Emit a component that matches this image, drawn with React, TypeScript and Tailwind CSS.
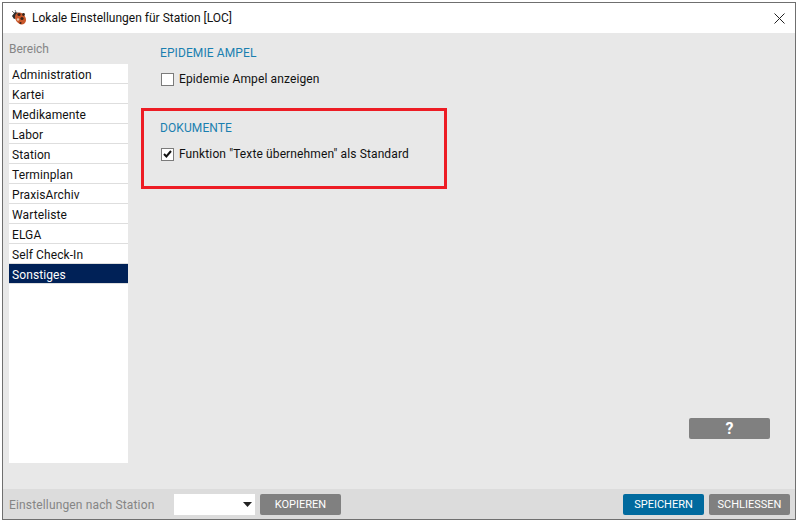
const areas = [
  "Administration",
  "Kartei",
  "Medikamente",
  "Labor",
  "Station",
  "Terminplan",
  "PraxisArchiv",
  "Warteliste",
  "ELGA",
  "Self Check-In",
];

function Ladybug() {
  return (
    <svg width="16" height="16" viewBox="0 0 16 16" className="shrink-0">
      <path d="M1 6 L4 2 L8 3 L6 8 L3 9 Z" fill="#2b2b2b" />
      <path d="M3 3 L1 1 M5 2 L4 0" stroke="#777" strokeWidth="1" />
      <ellipse cx="9.5" cy="8.5" rx="5" ry="6.5" fill="#c9572b" transform="rotate(-35 9.5 8.5)" />
      <circle cx="8" cy="4.5" r="1.6" fill="#3a2418" />
      <circle cx="12.5" cy="4.5" r="1.4" fill="#3a2418" />
      <circle cx="11" cy="8.5" r="1.6" fill="#3a2418" />
      <circle cx="7" cy="9.5" r="1.2" fill="#e9c5a8" />
      <circle cx="9.5" cy="13" r="1.1" fill="#3a2418" />
    </svg>
  );
}

function Check({ checked, label }: { checked?: boolean; label: string }) {
  return (
    <div className="flex h-[14px] items-center pl-[1px]">
      <div className="flex h-[13px] w-[13px] items-center justify-center border border-[#7b7b7b] bg-white">
        {checked && (
          <svg width="9" height="8" viewBox="0 0 9 8">
            <path d="M1 4 L3.4 6.5 L8 1" fill="none" stroke="#111" strokeWidth="2" />
          </svg>
        )}
      </div>
      <span className="ml-[5px] text-[12px] tracking-[0.12px] text-[#111]">{label}</span>
    </div>
  );
}

function Btn({ label, className }: { label: string; className: string }) {
  return (
    <button
      type="button"
      className={`flex h-[21px] items-center justify-center rounded-[2px] pt-[2px] text-[11px] text-white ${className}`}
    >
      {label}
    </button>
  );
}

export default function App() {
  return (
    <div className="h-[524px] w-[798px] bg-white pt-[2px] pl-[2px] pr-[2px] pb-[4px] font-['Roboto',sans-serif]">
      <div className="flex h-full w-full flex-col border border-[#6f6f6f]">
        <div className="flex h-[30px] items-center bg-white pl-[8px] pr-[10px]">
          <Ladybug />
          <span className="ml-[5px] text-[12px] text-[#111]">
            Lokale Einstellungen für Station [LOC]
          </span>
          <svg width="11" height="11" viewBox="0 0 11 11" className="ml-auto">
            <path d="M0.5 0.5 L10.5 10.5 M10.5 0.5 L0.5 10.5" stroke="#222" strokeWidth="1" />
          </svg>
        </div>

        <div className="relative flex min-h-0 flex-1 bg-[#e8e8e8] pl-[6px]">
          <aside className="flex w-[119px] flex-col pt-[9px] pb-[26px]">
            <div className="h-[22px] text-[12px] leading-[14px] text-[#858585]">Bereich</div>
            <ul className="flex-1 bg-white text-[12px] tracking-[0.1px] text-[#111]">
              {areas.map((a) => (
                <li
                  key={a}
                  className="flex h-[20px] items-center border-b border-[#dedede] pl-[3px] pt-[2px]"
                >
                  {a}
                </li>
              ))}
              <li className="flex h-[20px] items-center border-b border-[#dedede] bg-[#002157] bg-clip-padding pl-[3px] pt-[2px] text-white">
                Sonstiges
              </li>
            </ul>
          </aside>

          <main className="relative flex-1 pl-[32px] pt-[13px]">
            <h3 className="text-[12px] leading-[14px] tracking-[0.1px] text-[#1a7fb0]">
              EPIDEMIE AMPEL
            </h3>
            <div className="mt-[12px]">
              <Check label="Epidemie Ampel anzeigen" />
            </div>
            <h3 className="mt-[35px] text-[12px] leading-[14px] tracking-[0.1px] text-[#1a7fb0]">
              DOKUMENTE
            </h3>
            <div className="mt-[12px]">
              <Check checked label={'Funktion "Texte übernehmen" als Standard'} />
            </div>
            <div className="absolute left-[13px] top-[75px] h-[81px] w-[306px] border-[3px] border-[#ed1c24]" />
            <button
              type="button"
              className="absolute right-[25px] bottom-[50px] flex h-[21px] w-[81px] items-center justify-center rounded-[2px] bg-[#808080] text-[16px] font-bold text-white"
            >
              ?
            </button>
          </main>
        </div>

        <div className="flex h-[30px] items-center bg-[#dcdcdc] pl-[6px] pr-[5px]">
          <span className="w-[165px] pt-[1px] text-[12px] tracking-[0.15px] text-[#858585]">
            Einstellungen nach Station
          </span>
          <div className="flex h-[21px] w-[81px] items-center justify-end bg-white pr-[3px]">
            <svg width="9" height="5" viewBox="0 0 9 5">
              <path d="M0 0 H9 L4.5 5 Z" fill="#222" />
            </svg>
          </div>
          <Btn label="KOPIEREN" className="ml-[5px] w-[81px] bg-[#808080]" />
          <Btn label="SPEICHERN" className="ml-auto w-[81px] bg-[#006a9e]" />
          <Btn label="SCHLIESSEN" className="ml-[5px] w-[81px] bg-[#808080]" />
        </div>
      </div>
    </div>
  );
}
